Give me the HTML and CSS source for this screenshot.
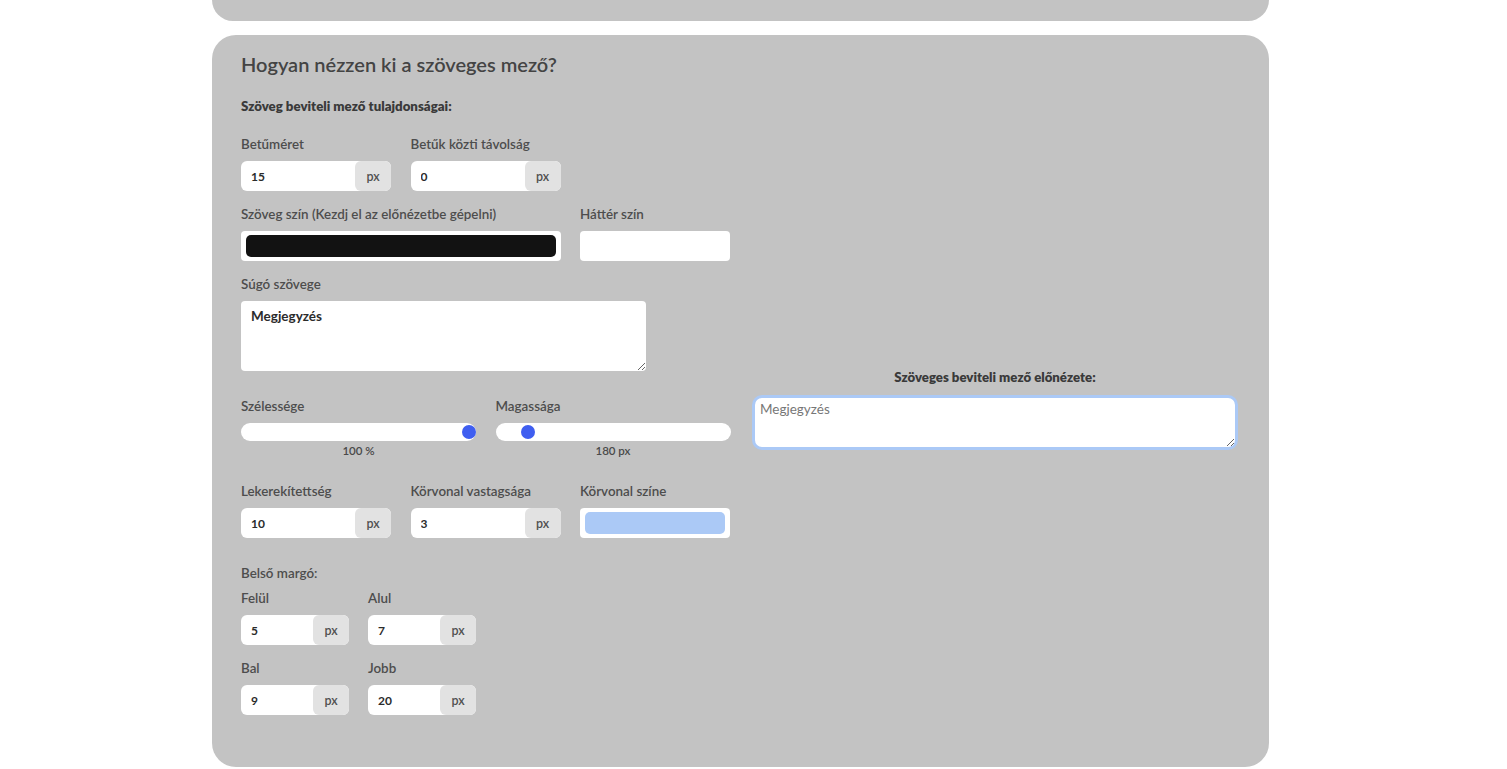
FILE: index.html
```html
<!DOCTYPE html>
<html>
<head>
<meta name="viewport" content="width=device-width, initial-scale=1">
<link rel="stylesheet" href="styles.css">
</head>
<body>
<div id="allContent">

<div class="card card-cut"></div>

<div class="card">
  <h2 class="card-title">Hogyan nézzen ki a szöveges mező?</h2>

  <div class="layout">
    <div class="settings">
      <h4 class="section-title">Szöveg beviteli mező tulajdonságai:</h4>

      <div class="row three">
        <div class="field">
          <label>Betűméret</label>
          <div class="input-group"><input type="text" value="15"><span class="addon">px</span></div>
        </div>
        <div class="field">
          <label>Betűk közti távolság</label>
          <div class="input-group"><input type="text" value="0"><span class="addon">px</span></div>
        </div>
      </div>

      <div class="row three">
        <div class="field span2">
          <label>Szöveg szín (Kezdj el az előnézetbe gépelni)</label>
          <div class="color-box"><span class="swatch swatch-dark"></span></div>
        </div>
        <div class="field">
          <label>Háttér szín</label>
          <div class="color-box"><span class="swatch swatch-white"></span></div>
        </div>
      </div>

      <div class="row">
        <div class="field">
          <label>Súgó szövege</label>
          <textarea class="hint-text">Megjegyzés</textarea>
        </div>
      </div>

      <div class="row two sliders">
        <div class="field">
          <label>Szélessége</label>
          <input type="range" class="slider" min="10" max="100" value="100">
          <div class="slider-value">100 %</div>
        </div>
        <div class="field">
          <label>Magassága</label>
          <input type="range" class="slider" min="100" max="800" value="180">
          <div class="slider-value">180 px</div>
        </div>
      </div>

      <div class="row three">
        <div class="field">
          <label>Lekerekítettség</label>
          <div class="input-group"><input type="text" value="10"><span class="addon">px</span></div>
        </div>
        <div class="field">
          <label>Körvonal vastagsága</label>
          <div class="input-group"><input type="text" value="3"><span class="addon">px</span></div>
        </div>
        <div class="field">
          <label>Körvonal színe</label>
          <div class="color-box"><span class="swatch swatch-blue"></span></div>
        </div>
      </div>

      <div class="padding-block">
        <div class="small-title">Belső margó:</div>
        <div class="row pads">
          <div class="field">
            <label>Felül</label>
            <div class="input-group"><input type="text" value="5"><span class="addon">px</span></div>
          </div>
          <div class="field">
            <label>Alul</label>
            <div class="input-group"><input type="text" value="7"><span class="addon">px</span></div>
          </div>
        </div>
        <div class="row pads last">
          <div class="field">
            <label>Bal</label>
            <div class="input-group"><input type="text" value="9"><span class="addon">px</span></div>
          </div>
          <div class="field">
            <label>Jobb</label>
            <div class="input-group"><input type="text" value="20"><span class="addon">px</span></div>
          </div>
        </div>
      </div>
    </div>

    <div class="preview">
      <label class="preview-label">Szöveges beviteli mező előnézete:</label>
      <textarea class="preview-input" placeholder="Megjegyzés"></textarea>
    </div>
  </div>
</div>

</div>
</body>
</html>
```

FILE: styles.css
```css
body {
  margin: 0;
  background: #ffffff;
  font-family: "Lato", sans-serif;
  color: #4a4a4a;
}

#allContent {
  width: 1057px;
  margin-left: 212px;
}

/* grey panels */
.card {
  background-color: #c3c3c3;
  border-radius: 24px;
  padding: 17px 31px 52px 29px;
  margin-bottom: 14px;
}

.card-cut {
  height: 21px;
  padding: 0;
  border-radius: 0 0 24px 24px;
}

.card-title {
  margin: 0 0 22px;
  font-size: 20px;
  line-height: 24px;
  font-weight: 600;
  color: #444444;
}

.layout {
  display: grid;
  grid-template-columns: 490px 1fr;
  column-gap: 21px;
  align-items: center;
}

.section-title {
  margin: 0 0 21px;
  font-size: 13.25px;
  line-height: 16px;
  font-weight: 800;
  color: #3a3a3a;
}

/* rows of fields */
.row {
  display: grid;
  column-gap: 19.5px;
  margin-bottom: 14px;
}

.row.three {
  grid-template-columns: 150px 150px 150px;
}

.row.two {
  grid-template-columns: 235px 235px;
}

.row.pads {
  grid-template-columns: 108px 108px;
  column-gap: 19px;
}

.row.last {
  margin-bottom: 0;
}

.span2 {
  grid-column: span 2;
}

.field label,
.small-title {
  display: block;
  font-size: 13.4px;
  line-height: 18px;
  font-weight: 600;
  color: #4d4d4d;
  margin-bottom: 8px;
}

.small-title {
  margin-bottom: 7px;
}

/* number inputs with px addon */
.input-group {
  display: flex;
  height: 30px;
  background: #ffffff;
  border-radius: 6px;
  overflow: hidden;
}

.input-group input {
  flex: 1;
  min-width: 0;
  border: none;
  outline: none;
  padding: 0 0 0 10px;
  font-family: inherit;
  font-size: 12px;
  font-weight: 700;
  color: #2b2b2b;
  background: transparent;
}

.addon {
  width: 36px;
  display: flex;
  align-items: center;
  justify-content: center;
  background: #e2e2e2;
  border-radius: 6px 0 0 6px;
  font-size: 12.5px;
  font-weight: 600;
  color: #505050;
}

/* colour pickers */
.color-box {
  height: 30px;
  box-sizing: border-box;
  padding: 4px 5px;
  background: #ffffff;
  border-radius: 4px;
}

.swatch {
  display: block;
  height: 100%;
  border-radius: 5px;
}

.swatch-dark {
  background: #121212;
}

.swatch-white {
  background: #ffffff;
}

.swatch-blue {
  background: #abc9f6;
}

/* hint textarea */
.hint-text {
  display: block;
  width: 405px;
  height: 70px;
  box-sizing: border-box;
  border: none;
  border-radius: 4px;
  padding: 7px 10px;
  font-family: inherit;
  font-size: 13.5px;
  font-weight: 700;
  color: #2b2b2b;
  margin-bottom: 12px;
}

/* sliders */
.sliders {
  margin-bottom: 22px;
}

.slider {
  -webkit-appearance: none;
  appearance: none;
  display: block;
  width: 100%;
  height: 18px;
  margin: 0;
  background: #ffffff;
  border-radius: 9px;
  outline: none;
}

.slider::-webkit-slider-thumb {
  -webkit-appearance: none;
  width: 14px;
  height: 14px;
  border-radius: 50%;
  background: #3f5ef0;
  cursor: pointer;
}

.slider-value {
  margin-top: 1px;
  text-align: center;
  font-size: 11.5px;
  line-height: 18px;
  font-weight: 600;
  color: #4a4a4a;
}

.padding-block {
  margin-top: 26px;
}

/* preview column */
.preview {
  padding-top: 4px;
}

.preview-label {
  display: block;
  text-align: center;
  font-size: 13.2px;
  line-height: 18px;
  font-weight: 800;
  color: #3a3a3a;
  margin-bottom: 9px;
}

.preview-input {
  display: block;
  width: 100%;
  height: 55px;
  box-sizing: border-box;
  margin: 0;
  border: 3px solid #abc9f6;
  border-radius: 10px;
  padding: 3px 9px 7px 5px;
  font-family: inherit;
  font-size: 13.5px;
  background: #ffffff;
}

.preview-input::placeholder {
  color: #777777;
}
```
